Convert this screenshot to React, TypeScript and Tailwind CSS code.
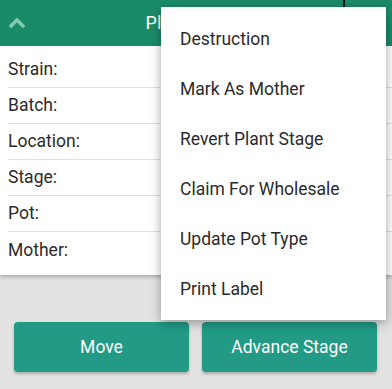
import React from "react";

const rows = ["Strain:", "Batch:", "Location:", "Stage:", "Pot:", "Mother:"];
const items = [
  "Destruction",
  "Mark As Mother",
  "Revert Plant Stage",
  "Claim For Wholesale",
  "Update Pot Type",
  "Print Label",
];

export default function App() {
  return (
    <div
      className="relative w-[392px] h-[389px] bg-[#e2e2e2] overflow-hidden"
      style={{ fontFamily: "Roboto, 'Liberation Sans', sans-serif" }}
    >
      <div className="bg-white shadow-[0_2px_4px_rgba(0,0,0,0.25)]">
        <div className="grid grid-cols-[1fr_auto_1fr] items-center h-[46px] bg-[#1a8b69]">
          <div className="pl-[8px] flex items-center">
            <svg width="18" height="12" viewBox="0 0 18 12">
              <path d="M2 10 L9 3 L16 10" fill="none" stroke="#7ecdb0" strokeWidth="3.5" />
            </svg>
          </div>
          <div className="text-white text-[18px] leading-none">Plant Details</div>
          <div className="flex justify-end h-full">
            <div className="w-[49px] h-full border-l-2 border-[#111]" />
          </div>
        </div>
        <div className="pt-[6px] pb-[7px]">
          {rows.map((r, i) => (
            <div key={r} className="pl-[8px]">
              <div
                className={`h-[36px] flex items-center text-[17.5px] text-[#2b2b2b] ${
                  i < rows.length - 1 ? "border-b border-[#e0e0e0]" : ""
                }`}
              >
                {r}
              </div>
            </div>
          ))}
        </div>
      </div>

      <div className="flex gap-[13px] pl-[14px] pr-[15px] mt-[47px]">
        <button className="w-[175px] h-[50px] rounded-[4px] bg-[#229a86] text-white text-[17.5px] shadow-[0_2px_3px_rgba(0,0,0,0.25)]">
          Move
        </button>
        <button className="w-[175px] h-[50px] rounded-[4px] bg-[#229a86] text-white text-[17.5px] shadow-[0_2px_3px_rgba(0,0,0,0.25)]">
          Advance Stage
        </button>
      </div>

      <div className="absolute left-[161px] top-[7px] w-[225px] h-[313px] bg-white py-[7px] shadow-[0_3px_10px_rgba(0,0,0,0.35)]">
        {items.map((t) => (
          <div key={t} className="h-[50px] flex items-center pl-[19px] text-[17.5px] text-[#2b2b2b]">
            {t}
          </div>
        ))}
      </div>
    </div>
  );
}
